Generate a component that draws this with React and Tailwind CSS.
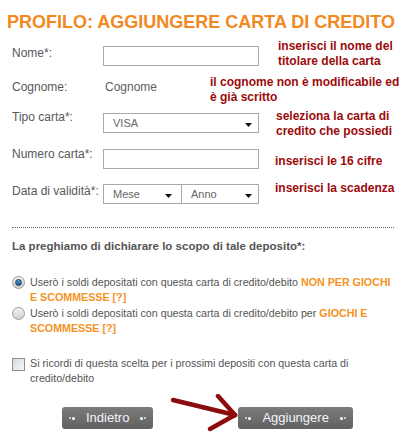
import React from 'react'

const note = "font-bold text-[12px] leading-[15px] text-[#9c0a0c]"
const label = "w-[91px] shrink-0 text-[12px] leading-[15px] text-[#585858]"
const field = "h-[20px] w-[156px] border border-[#a9a9a9] bg-white"

function Caret() {
  return (
    <svg width="7" height="4" viewBox="0 0 7 4" className="shrink-0">
      <path d="M0 0H7L3.5 4Z" fill="#111" />
    </svg>
  )
}

function Select({ text, width, caretRight = 6, className = '' }) {
  return (
    <div
      className={`flex h-[20px] items-center justify-between border border-[#a9a9a9] bg-white pl-[9px] text-[11px] text-[#666] ${className}`}
      style={{ width, paddingRight: caretRight }}
    >
      <span>{text}</span>
      <span className="mt-[3px] flex"><Caret /></span>
    </div>
  )
}

function Radio({ checked }) {
  return (
    <span className="mt-[1px] flex h-[13px] w-[13px] shrink-0 items-center justify-center rounded-full border border-[#9a9a9a] bg-gradient-to-b from-[#f4f4f4] to-[#cfcfcf]">
      {checked && (
        <span className="h-[7px] w-[7px] rounded-full border border-[#1f3f66] bg-gradient-to-b from-[#5aa0e0] to-[#1a4f8a]" />
      )}
    </span>
  )
}

function Deco({ flip }) {
  return (
    <span className={`flex items-center gap-[1px] ${flip ? 'flex-row-reverse' : ''}`}>
      <span className="h-[2px] w-[2px] rounded-full bg-[#e8e8e8]" />
      <span className="h-[3px] w-[3px] rounded-full bg-white" />
    </span>
  )
}

function Button({ children }) {
  return (
    <button className="flex h-[22px] items-center gap-[11px] rounded-[3px] bg-gradient-to-b from-[#7b7b7b] to-[#616161] px-[7px] text-[13px] text-[#f4f4fa]">
      <Deco />
      <span>{children}</span>
      <Deco flip />
    </button>
  )
}

export default function App() {
  return (
    <div className="relative h-[448px] w-[404px] overflow-hidden bg-white pl-[12px] pt-[12px] font-['Liberation_Sans',Arial,sans-serif]">
      <h1 className="-ml-[5px] whitespace-nowrap text-[18px] font-bold leading-[21px] text-[#f1891f]">
        PROFILO: AGGIUNGERE CARTA DI CREDITO
      </h1>

      {/* Nome */}
      <div className="mt-[6px] flex items-start">
        <div className={`${label} mt-[7px]`}>Nome*:</div>
        <div className={`${field} mt-[7px]`} />
        <div className={`${note} ml-[19px]`}>inserisci il nome del<br />titolare della carta</div>
      </div>

      {/* Cognome */}
      <div className="mt-[6px] flex items-start">
        <div className={`${label} mt-[5px]`}>Cognome:</div>
        <div className="mt-[5px] w-[107px] shrink-0 pl-[2px] text-[12px] leading-[15px] text-[#5e5e5e]">Cognome</div>
        <div className={note}>il cognome non è modificabile ed<br />è già scritto</div>
      </div>

      {/* Tipo carta */}
      <div className="mt-[4px] flex items-start">
        <div className={`${label} mt-[1px]`}>Tipo carta*:</div>
        <Select text="VISA" width={156} className="mt-[4px]" />
        <div className={`${note} ml-[17px]`}>seleziona la carta di<br />credito che possiedi</div>
      </div>

      {/* Numero carta */}
      <div className="mt-[8px] flex items-start">
        <div className={label}>Numero carta*:</div>
        <div className={`${field} mt-[2px]`} />
        <div className={`${note} ml-[16px] mt-[7px]`}>inserisci le 16 cifre</div>
      </div>

      {/* Data di validità */}
      <div className="mt-[12px] flex items-start">
        <div className={`${label} mt-[3px]`}>Data di validità*:</div>
        <div className="mt-[3px] flex">
          <Select text="Mese" width={79} caretRight={9} />
          <Select text="Anno" width={78} className="-ml-[1px]" />
        </div>
        <div className={`${note} ml-[16px]`}>inserisci la scadenza</div>
      </div>

      <div className="mt-[23px] mr-[10px] border-t border-dotted border-[#666]" />

      <p className="mt-[11px] text-[11.5px] font-bold leading-[15px] text-[#555]">
        La preghiamo di dichiarare lo scopo di tale deposito*:
      </p>

      <div className="mt-[21px] flex items-start gap-[5px]">
        <Radio checked />
        <p className="w-[366px] text-[10.7px] leading-[15px] text-[#555]">
          Userò i soldi depositati con questa carta di credito/debito{' '}
          <span className="font-bold text-[#f6921e]">NON PER GIOCHI E SCOMMESSE [?]</span>
        </p>
      </div>

      <div className="mt-[1px] flex items-start gap-[5px]">
        <Radio />
        <p className="w-[366px] text-[10.7px] leading-[15px] text-[#555]">
          Userò i soldi depositati con questa carta di credito/debito per{' '}
          <span className="font-bold text-[#f6921e]">GIOCHI E SCOMMESSE [?]</span>
        </p>
      </div>

      <div className="mt-[20px] flex items-start gap-[5px]">
        <span className="mt-[2px] h-[13px] w-[13px] shrink-0 border border-[#8f8f8f] bg-gradient-to-br from-[#d9d9d9] to-[#f7f7f7]" />
        <p className="w-[366px] text-[10.7px] leading-[15px] text-[#555]">
          Si ricordi di questa scelta per i prossimi depositi con questa carta di credito/debito
        </p>
      </div>

      <div className="relative mt-[21px] flex items-center gap-[85px] pl-[50px]">
        <Button>Indietro</Button>
        <Button>Aggiungere</Button>
        {/* hand-drawn arrow pointing at Aggiungere */}
        <svg className="absolute left-[148px] top-[-13px]" width="80" height="40" viewBox="0 0 80 40">
          <g stroke="#8c0b0d" strokeWidth="4.5" strokeLinecap="round" fill="none">
            <path d="M13 6 L75 21" />
            <path d="M58 2 L75 21" />
            <path d="M75 21 L50 35" />
          </g>
        </svg>
      </div>
    </div>
  )
}
